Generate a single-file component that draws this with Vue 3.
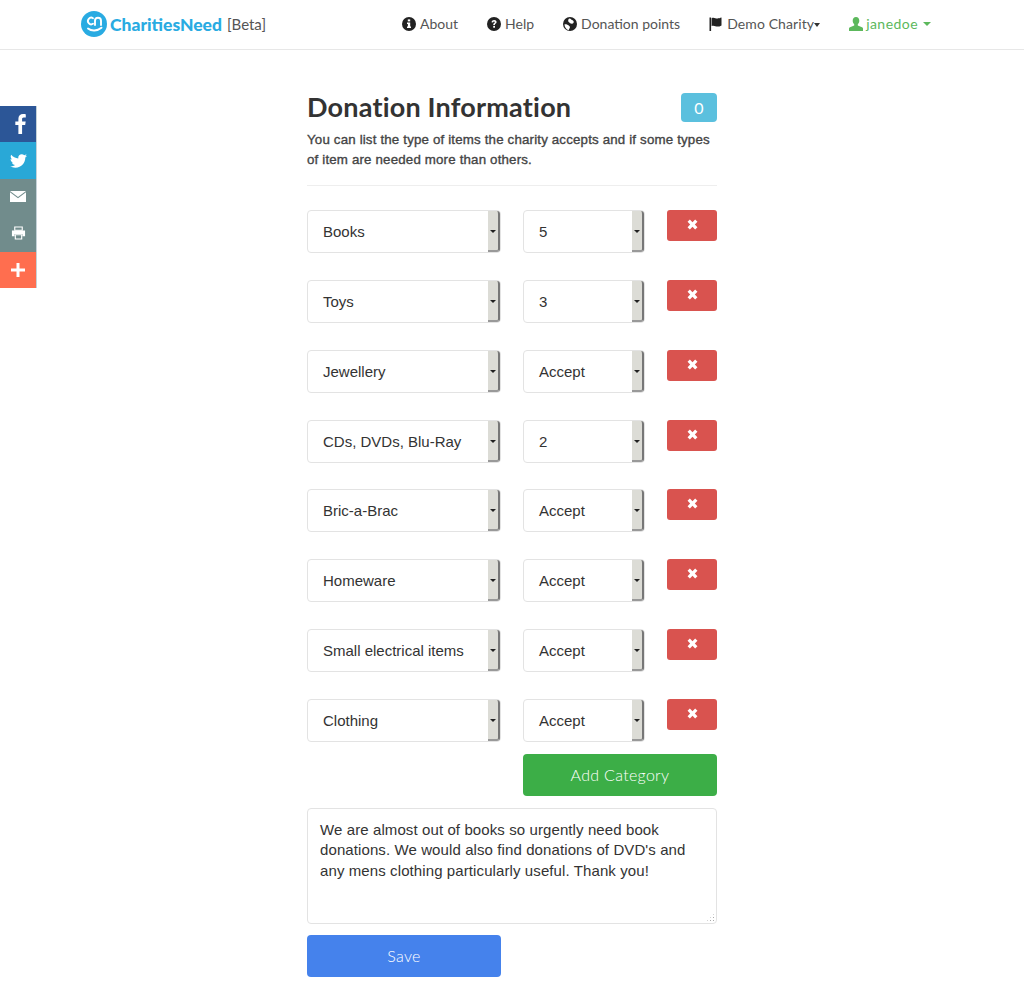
<script setup>
const rows = [
  { name: 'Books', level: '5' },
  { name: 'Toys', level: '3' },
  { name: 'Jewellery', level: 'Accept' },
  { name: 'CDs, DVDs, Blu-Ray', level: '2' },
  { name: 'Bric-a-Brac', level: 'Accept' },
  { name: 'Homeware', level: 'Accept' },
  { name: 'Small electrical items', level: 'Accept' },
  { name: 'Clothing', level: 'Accept' },
]
</script>

<template>
  <div class="page">
    <header class="navbar">
      <a class="brand">
        <svg class="logo" viewBox="0 0 26 26" width="26" height="26">
          <circle cx="13" cy="13" r="13" fill="#29abe2" />
          <path d="M12 7.200a3.300 3.300 0 1 0 0 5.600" fill="none" stroke="#fff" stroke-width="1.900" stroke-linecap="round" />
          <path d="M14 14v-4.200a3 3 0 0 1 6 0V14" fill="none" stroke="#fff" stroke-width="1.900" stroke-linecap="round" />
          <path d="M7 17.500c3.500 2.800 9 2.800 13.500-.8" fill="none" stroke="#fff" stroke-width="1.900" stroke-linecap="round" />
        </svg>
        <span class="brand-name">CharitiesNeed</span>
        <span class="beta">[Beta]</span>
      </a>
      <nav class="nav">
        <a class="nav-link about">
          <svg viewBox="0 0 14 14" width="14" height="14"><circle cx="7" cy="7" r="7" fill="#222" /><rect x="5.800" y="2.400" width="2.400" height="2" fill="#fff" /><path d="M5 5.600h3.200v4H9v1.300H5V9.600h.9V6.900H5z" fill="#fff" /></svg>
          About
        </a>
        <a class="nav-link help">
          <svg viewBox="0 0 14 14" width="14" height="14"><circle cx="7" cy="7" r="7" fill="#222" /><path d="M4.500 5.300C4.800 3.700 5.900 3 7.100 3c1.500 0 2.500.9 2.500 2.100 0 1.600-1.700 1.600-1.700 2.800H6.200c0-1.900 1.600-1.900 1.600-2.700 0-.4-.3-.7-.8-.7-.5 0-.8.3-1 .9z" fill="#fff" /><rect x="6.200" y="8.900" width="1.800" height="1.800" fill="#fff" /></svg>
          Help
        </a>
        <a class="nav-link points">
          <svg viewBox="0 0 14 14" width="14" height="14"><circle cx="7" cy="7" r="7" fill="#222" /><path d="M6.500 1.400c1.700.2 1.400 1.400 2.600 1.700 1.300.3 2.200 1.700 1.300 3-.8 1.100-2.800.6-3.600-.2-1-1-1.500-.9-1.600-2.200 0-1 .4-2.200 1.300-2.300zM1.500 7.300c1.500-.4 3.400.3 4.200 1.300.6.8 1.400.8 1.200 2-.2 1-1 1.400-1.100 2.600C3.300 12.700 1.400 10.200 1.500 7.300z" fill="#fff" /></svg>
          Donation points
        </a>
        <a class="nav-link charity">
          <svg viewBox="0 0 13 14" width="13" height="14"><path d="M.5.500h1.600v13.500H.5z" fill="#222" /><path d="M2.600 1.200c2.400-1.200 4 .6 6 .4 1.200-.1 2.300-.5 3.900-1v7.800c-1.500.8-2.600 1.200-3.900 1.200-2.100 0-3.600-1.700-6-.6z" fill="#222" /></svg>
          <span>Demo Charity<i class="caret" /></span>
        </a>
        <a class="nav-link user">
          <svg viewBox="0 0 14 14" width="14" height="14"><path d="M7 0c2.100 0 3.300 1.500 3.300 3.700 0 1.400-.6 2.800-1.500 3.500v1.300l4.200 1.700c.7.300 1 .8 1 1.400V14H0v-2.400c0-.6.300-1.100 1-1.400l4.200-1.700V7.200c-.9-.7-1.500-2.100-1.500-3.500C3.700 1.500 4.900 0 7 0z" fill="#5cb85c" /></svg>
          <span>janedoe</span><i class="caret" />
        </a>
      </nav>
    </header>

    <aside class="share">
      <a class="share-item fb">
        <svg viewBox="3 0 10.300 19.500" width="11" height="20"><path d="M9.700 19.500v-8.800h3l.5-3.500H9.700V5c0-1 .3-1.700 1.700-1.700h1.900V.2C13 .1 11.900 0 10.600 0 8 0 6.100 1.600 6.100 4.600v2.600h-3v3.500h3v8.800z" fill="#fff" /></svg>
      </a>
      <a class="share-item tw">
        <svg viewBox="0 0 20 16" width="17" height="14"><path d="M20 1.900c-.7.300-1.500.5-2.400.6.900-.5 1.500-1.300 1.800-2.300-.8.500-1.700.8-2.600 1C16 .4 14.900 0 13.800 0c-2.300 0-4.100 1.800-4.100 4.100 0 .3 0 .6.100.9C6.400 4.900 3.400 3.200 1.400.7 1 1.400.8 2.100.8 2.800c0 1.400.7 2.700 1.800 3.400-.7 0-1.300-.2-1.900-.5v.1c0 2 1.400 3.600 3.300 4-.6.200-1.200.2-1.800.1.500 1.600 2 2.800 3.800 2.800C4.600 13.800 2.300 14.600 0 14.300 1.800 15.400 4 16 6.300 16c7.500 0 11.700-6.300 11.700-11.700v-.5c.8-.6 1.500-1.300 2-2z" fill="#fff" /></svg>
      </a>
      <a class="share-item grey">
        <svg viewBox="0 0 16 11" width="16" height="11"><path d="M0 0h16L8 6z" fill="#fff" /><path d="M0 1.300V11h16V1.300L8 7.300z" fill="#fff" /></svg>
      </a>
      <a class="share-item grey">
        <svg viewBox="0 0 16 14" width="15" height="14"><path d="M4 .6h8v3.400H4z" fill="none" stroke="#fff" stroke-width="1.200" /><path d="M1 4.300h14v6.200h-2.800V8H3.800v2.500H1z" fill="#fff" /><path d="M4.600 8.800h6.800v4.600H4.600z" fill="none" stroke="#fff" stroke-width="1.200" /></svg>
      </a>
      <a class="share-item more">
        <svg viewBox="0 0 14 14" width="14" height="14"><path d="M5.500 0h3v5.500H14v3H8.500V14h-3V8.500H0v-3h5.500z" fill="#fff" /></svg>
      </a>
    </aside>

    <main class="content">
      <div class="title-row">
        <h1>Donation Information</h1>
        <span class="count">0</span>
      </div>
      <p class="lead">You can list the type of items the charity accepts and if some types of item are needed more than others.</p>
      <hr />

      <div class="rows">
        <div v-for="row in rows" :key="row.name" class="row">
          <div class="select wide">
            <span>{{ row.name }}</span>
            <i class="arrow" />
          </div>
          <div class="select narrow">
            <span>{{ row.level }}</span>
            <i class="arrow" />
          </div>
          <button class="remove" type="button">
            <svg viewBox="0 0 10 10" width="11" height="11"><path d="M2.600.5 5 2.900 7.400.5 9.500 2.600 7.100 5l2.400 2.400-2.100 2.100L5 7.100 2.600 9.500.5 7.400 2.900 5 .5 2.600z" fill="#fff" /></svg>
          </button>
        </div>
      </div>

      <div class="add-row">
        <button class="btn add" type="button">Add Category</button>
      </div>
      <div class="notes-wrap">
        <textarea class="notes" readonly>We are almost out of books so urgently need book donations. We would also find donations of DVD's and any mens clothing particularly useful. Thank you!</textarea>
      </div>
      <button class="btn save" type="button">Save</button>
    </main>
  </div>
</template>

<style scoped>
.page {
  position: relative;
  width: 1024px;
  height: 1004px;
  background: #fff;
  color: #333;
  font-family: "Liberation Sans", Arial, sans-serif;
  font-size: 15px;
  overflow: hidden;
}
.navbar {
  display: flex;
  align-items: center;
  justify-content: space-between;
  box-sizing: border-box;
  height: 50px;
  padding: 0 93px 1px 81px;
  border-bottom: 1px solid #e7e7e7;
}
.brand {
  display: flex;
  align-items: center;
}
.logo {
  margin-right: 3px;
}
.brand-name {
  font-family: Lato, sans-serif;
  font-weight: 900;
  font-size: 17.500px;
  color: #29abe2;
}
.beta {
  margin-left: 5px;
  font-family: Lato, sans-serif;
  font-size: 15px;
  color: #555;
}
.nav {
  display: flex;
  align-items: center;
  gap: 29px;
  padding-bottom: 1px;
}
.nav-link {
  display: flex;
  align-items: center;
  gap: 4px;
  font-family: Lato, sans-serif;
  font-size: 14px;
  color: #555;
}
.nav-link.charity {
  gap: 5px;
  letter-spacing: .1px;
}
.nav-link.user {
  color: #5cb85c;
  gap: 3px;
  letter-spacing: .45px;
}
.caret {
  display: inline-block;
  vertical-align: 2px;
  border-top: 4px solid #333;
  border-left: 3.500px solid transparent;
  border-right: 3.500px solid transparent;
}
.user .caret {
  margin-left: 2px;
  border-top-color: #5cb85c;
  border-left-width: 4px;
  border-right-width: 4px;
}
.share {
  position: absolute;
  left: 0;
  top: 106px;
  box-sizing: border-box;
  width: 37px;
  border-right: 1px solid #c5d2d8;
}
.share-item {
  display: flex;
  align-items: center;
  justify-content: center;
  height: 36.400px;
}
.fb {
  background: #2c5697;
  padding-left: 5px;
}
.tw {
  background: #29a8d7;
}
.grey {
  background: #718c8c;
}
.more {
  background: #ff6e4f;
}
.content {
  width: 410px;
  margin-left: 307px;
  padding-top: 43px;
}
.title-row {
  display: flex;
  align-items: flex-start;
  justify-content: space-between;
  height: 29px;
}
h1 {
  margin: 0;
  font-family: Lato, sans-serif;
  font-weight: 700;
  font-size: 27px;
  line-height: 28px;
  letter-spacing: .2px;
  color: #333;
}
.count {
  display: flex;
  align-items: center;
  justify-content: center;
  width: 36px;
  height: 29px;
  border-radius: 4px;
  background: #5bc0de;
  color: #fff;
  font-family: Lato, sans-serif;
  font-size: 16px;
}
.lead {
  margin: 8px 0 0;
  font-size: 13.300px;
  line-height: 20px;
  letter-spacing: .17px;
  -webkit-text-stroke: .35px #444;
  color: #444;
}
hr {
  margin: 15px 0 24px;
  border: 0;
  border-top: 1px solid #eee;
}
.rows {
  display: flex;
  flex-direction: column;
  gap: 26.860px;
}
.row {
  display: flex;
  align-items: flex-start;
  gap: 22px;
}
.select {
  position: relative;
  display: flex;
  align-items: center;
  box-sizing: border-box;
  height: 43px;
  padding-left: 15px;
  border: 1px solid #e3e3e3;
  border-radius: 4px;
  background: #fff;
  font-size: 15px;
  color: #333;
}
.wide {
  width: 194px;
}
.narrow {
  width: 122px;
}
.arrow {
  position: absolute;
  top: 0;
  right: 0;
  bottom: 0;
  box-sizing: border-box;
  width: 12px;
  background: #dcdcd6;
  border-right: 2px solid #777;
  border-bottom: 2px solid #999;
  border-radius: 0 3px 3px 0;
}
.arrow::after {
  content: "";
  position: absolute;
  top: 19px;
  left: 2px;
  border-top: 3px solid #222;
  border-left: 3px solid transparent;
  border-right: 3px solid transparent;
}
.remove {
  display: flex;
  align-items: center;
  justify-content: center;
  width: 50px;
  height: 31px;
  padding: 0 0 2px;
  border: 0;
  border-radius: 3px;
  background: #d9534f;
}
.add-row {
  display: flex;
  justify-content: flex-end;
  margin-top: 12px;
}
.btn {
  width: 194px;
  height: 42px;
  padding: 0 0 2px;
  border: 0;
  border-radius: 4px;
  color: #fff;
  font-family: Lato, sans-serif;
  font-weight: 300;
  font-size: 16px;
  letter-spacing: .3px;
}
.add {
  background: #3cae47;
}
.save {
  display: block;
  background: #4582ec;
}
.notes-wrap {
  position: relative;
  margin: 12px 0 11px;
}
.notes-wrap::after {
  content: "";
  position: absolute;
  right: 2px;
  bottom: 2px;
  width: 9px;
  height: 9px;
  background: radial-gradient(circle, #aaa 0.7px, transparent 0.8px) 0 0 / 3px 3px;
  clip-path: polygon(100% 0, 100% 100%, 0 100%);
}
.notes {
  display: block;
  box-sizing: border-box;
  width: 410px;
  height: 116px;
  padding: 11px 12px;
  border: 1px solid #e3e3e3;
  border-radius: 4px;
  color: #333;
  font-family: "Liberation Sans", Arial, sans-serif;
  font-size: 15px;
  line-height: 20.400px;
  letter-spacing: .1px;
  outline: none;
  resize: none;
}
</style>
